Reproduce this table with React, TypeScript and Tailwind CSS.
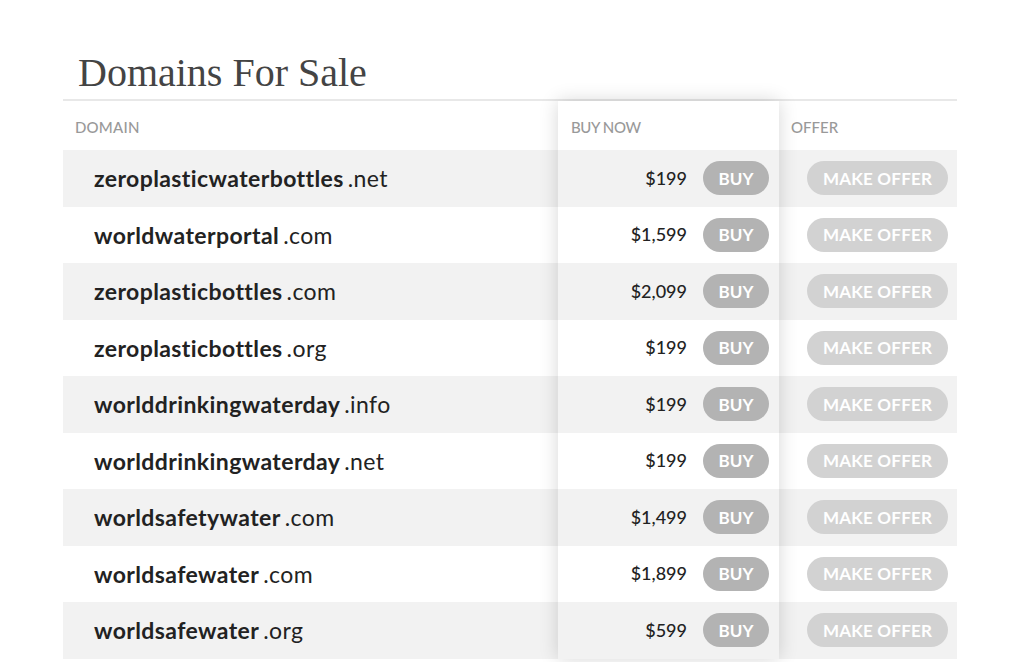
const rows = [
  { name: "zeroplasticwaterbottles", tld: ".net", price: "$199" },
  { name: "worldwaterportal", tld: ".com", price: "$1,599" },
  { name: "zeroplasticbottles", tld: ".com", price: "$2,099" },
  { name: "zeroplasticbottles", tld: ".org", price: "$199" },
  { name: "worlddrinkingwaterday", tld: ".info", price: "$199" },
  { name: "worlddrinkingwaterday", tld: ".net", price: "$199" },
  { name: "worldsafetywater", tld: ".com", price: "$1,499" },
  { name: "worldsafewater", tld: ".com", price: "$1,899" },
  { name: "worldsafewater", tld: ".org", price: "$599" },
];

const rowBg = (i: number) => (i % 2 === 0 ? "bg-[#f2f2f2]" : "bg-white");

const App = () => {
  return (
    <div className="min-h-[662px] w-full bg-white font-['Lato','Liberation_Sans',sans-serif]">
      <div className="ml-[63px] w-[894px] pt-[53px]">
        <div className="border-b-2 border-[#e8e8e8] pb-[6px] pl-[15px]">
          <h1 className="font-['Liberation_Serif',serif] text-[40px] leading-[40px] text-[#444]">
            Domains For Sale
          </h1>
        </div>

        <div className="flex">
          {/* domain column */}
          <div className="w-[495px]">
            <div className="flex h-[49px] items-end pb-[12px] pl-[12px] text-[15px] font-medium tracking-[0.2px] text-[#999]">
              DOMAIN
            </div>
            {rows.map((r, i) => (
              <div
                key={i}
                className={`flex h-[56.5px] items-center pl-[31px] text-[23px] tracking-[0.4px] text-[#222] ${rowBg(i)}`}
              >
                <span className="font-bold">{r.name}</span>
                <span className="ml-[4px]">{r.tld}</span>
              </div>
            ))}
          </div>

          {/* buy now column */}
          <div className="relative z-10 w-[221px] shadow-[0_0_18px_rgba(0,0,0,0.16)]">
            <div className="flex h-[49px] items-end bg-white pb-[12px] pl-[13px] text-[15px] font-medium tracking-[-0.4px] text-[#999]">
              BUY NOW
            </div>
            {rows.map((r, i) => (
              <div key={i} className={`flex h-[56.5px] items-center justify-end pr-[10px] ${rowBg(i)}`}>
                <span className="text-[18px] font-medium text-[#222]">{r.price}</span>
                <button className="ml-[16px] h-[34px] w-[66px] rounded-full bg-[#b3b3b3] text-[17px] font-bold text-white">
                  BUY
                </button>
              </div>
            ))}
          </div>

          {/* offer column */}
          <div className="w-[178px]">
            <div className="flex h-[49px] items-end pb-[12px] pl-[12px] text-[15px] font-medium text-[#999]">
              OFFER
            </div>
            {rows.map((r, i) => (
              <div key={i} className={`flex h-[56.5px] items-center pl-[28px] ${rowBg(i)}`}>
                <button className="h-[34px] w-[141px] rounded-full bg-[#d2d2d2] text-[17px] font-bold tracking-[0.2px] text-white">
                  MAKE OFFER
                </button>
              </div>
            ))}
          </div>
        </div>
      </div>
    </div>
  );
};

export default App;
